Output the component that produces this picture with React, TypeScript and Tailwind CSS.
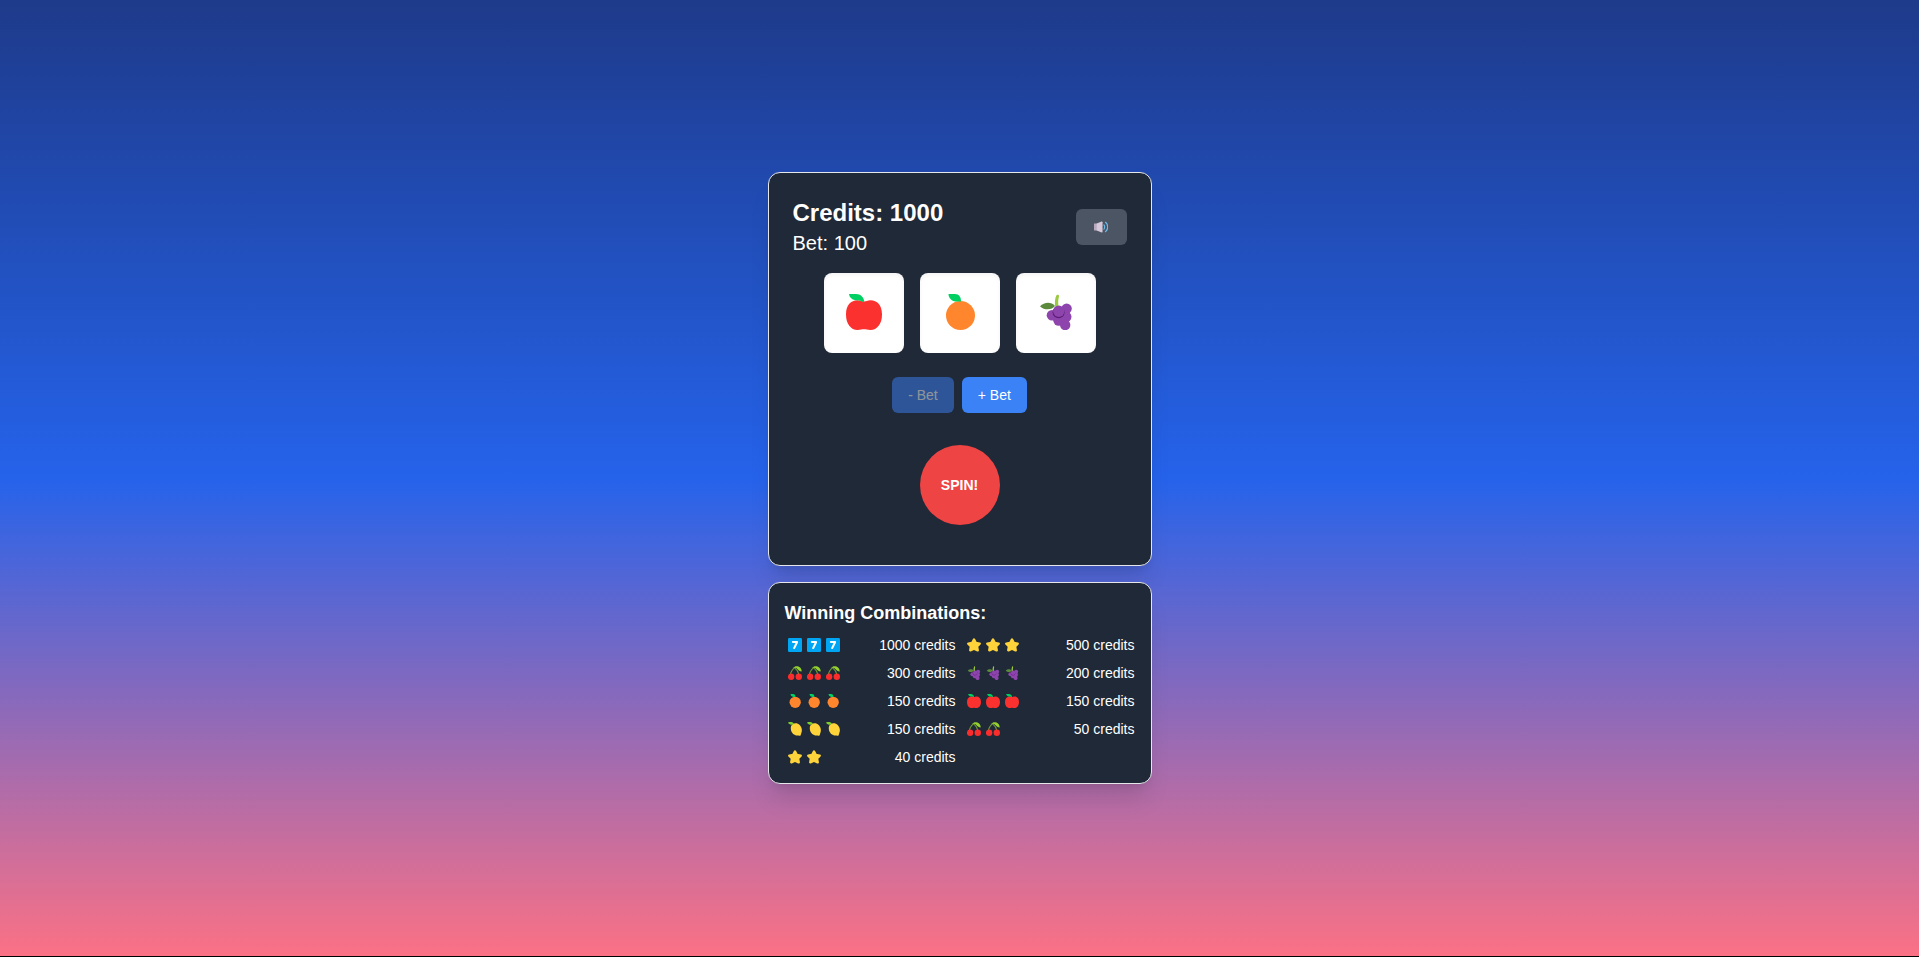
import { useState } from "react";
import type { ReactNode } from "react";

type SymbolName = "seven" | "star" | "cherry" | "grapes" | "orange" | "apple" | "lemon";

const art: Record<SymbolName, ReactNode> = {
  seven: (
    <>
      <rect width="36" height="36" rx="3.500" fill="#00a6f4" />
      <path
        d="M12.300 8H23.500C25.800 8 26.600 10 25.600 12L18.600 26.500C17.700 28.500 16.500 29 14.900 28.300C13.300 27.600 12.900 26.300 13.700 24.600L19.400 12.900H12.300C9 12.900 9 8 12.300 8Z"
        fill="#fff"
      />
    </>
  ),
  star: (
    <path
      d="M18 4L22.700 12.800L32.500 14.600L25.700 21.800L27.400 31.500L18 27.300L8.600 31.500L10.300 21.800L3.500 14.600L13.300 12.800Z"
      fill="#ffd43b"
      stroke="#ffd43b"
      strokeWidth="6.500"
      strokeLinejoin="round"
    />
  ),
  cherry: (
    <>
      <path
        d="M6.500 21C8 14 12 6 20 3M27.500 21C26.500 15 23 10 17.500 5"
        fill="none"
        stroke="#6f9f35"
        strokeWidth="2.600"
        strokeLinecap="round"
      />
      <path d="M13 5C17 0 26-1 31 4C34 7 35.500 11 35 14C30 14 26 11 22 6C19 4.500 16 4.500 13 5Z" fill="#94d12e" />
      <circle cx="8" cy="27.800" r="8.200" fill="#fb2c2c" />
      <circle cx="27.800" cy="27.800" r="8.200" fill="#fb2c2c" />
    </>
  ),
  grapes: (
    <>
      <path d="M2 12.200C6 8 13 7 17 12C14.500 15.500 7 17.200 2 12.200Z" fill="#5c8a3d" />
      <path d="M17.300 14C16.400 8 17 4 18.500 1.200C19.400.2 21.400.8 21 2.400C20 6 20 9 20.600 13Z" fill="#9bc93f" />
      <path d="M14 22L21 15L29 15L29 24L27 31L21 27Z" fill="#6d2a88" />
      <circle cx="28.600" cy="14.600" r="5.200" fill="#8e44ad" />
      <circle cx="14" cy="21.300" r="5.300" fill="#8e44ad" />
      <circle cx="27.200" cy="31" r="5.200" fill="#8e44ad" />
      <circle cx="20.800" cy="26.200" r="5.600" fill="#8e44ad" />
      <circle cx="28" cy="22.800" r="5.500" fill="#8e44ad" />
      <circle cx="20.600" cy="18.200" r="6" fill="#5b1d73" />
      <circle cx="20.800" cy="17.300" r="5.700" fill="#8e44ad" />
    </>
  ),
  orange: (
    <>
      <circle cx="18.500" cy="21.500" r="14.500" fill="#ff862d" />
      <path d="M6.500 0H13C17 0 19.200 3.500 19 7.500H13.500C9.500 7 6.500 4 6.500 0Z" fill="#00d062" />
    </>
  ),
  apple: (
    <>
      <path
        d="M0 20.500C0 11 5 6.300 11.500 6.300C14.500 6.300 16 7.600 18 7.600C20 7.600 21.500 6.300 24.500 6.300C31 6.300 36 11 36 20.500C36 30 31 36 24.500 36C21.500 36 20 35.300 18 35.300C16 35.300 14.500 36 11.500 36C5 36 0 30 0 20.500Z"
        fill="#fb312f"
      />
      <path d="M3 0H10C14.500 0 18.200 3.500 18.200 8C15.500 8 14.500 6.300 11.500 6.300H9.500C5.500 5.500 3.300 3 3 0Z" fill="#00d062" />
    </>
  ),
  lemon: (
    <>
      <path
        d="M11 6.500C16 2 25 2.500 30 7.500C35.500 13 37 21 34.500 27.500C33.500 30 33.500 31.500 32.500 34C31.500 36.500 27 35 24 35C16 34.500 9 29 7.500 20C6.500 14 7.500 9.500 11 6.500Z"
        fill="#ffd43b"
      />
      <path d="M0 1.500C4-1 11-1 15 3L13.500 5.500C8 8 2.500 7 0 1.500Z" fill="#7ccf2f" />
    </>
  ),
};

function Fruit({ name, className }: { name: SymbolName; className: string }) {
  return (
    <svg viewBox="0 0 36 36" className={className} role="img" aria-label={name}>
      {art[name]}
    </svg>
  );
}

function SpeakerIcon() {
  return (
    <svg viewBox="0 0 36 36" className="size-[14px]" aria-hidden="true">
      <path d="M1 9H9V27H1C0 27 0 26 0 25V11C0 10 0 9 1 9Z" fill="#b9a8bd" />
      <path d="M7 9L18 4.200C20.500 3.300 22 4 22 6V30C22 32 20.500 32.700 18 31.800L7 27Z" fill="#d6c8da" />
      <path
        d="M25.500 12.500C28 15 28 21 25.500 23.500M29.500 6C37 11 37 25 29.500 30"
        fill="none"
        stroke="#6fbcec"
        strokeWidth="3"
        strokeLinecap="round"
      />
    </svg>
  );
}

const combinations: { symbol: SymbolName; count: number; credits: number }[] = [
  { symbol: "seven", count: 3, credits: 1000 },
  { symbol: "star", count: 3, credits: 500 },
  { symbol: "cherry", count: 3, credits: 300 },
  { symbol: "grapes", count: 3, credits: 200 },
  { symbol: "orange", count: 3, credits: 150 },
  { symbol: "apple", count: 3, credits: 150 },
  { symbol: "lemon", count: 3, credits: 150 },
  { symbol: "cherry", count: 2, credits: 50 },
  { symbol: "star", count: 2, credits: 40 },
];

const allSymbols = Object.keys(art) as SymbolName[];

const cardClass =
  "w-full max-w-sm rounded-xl border border-[#e5e7eb] bg-[#1f2937] shadow-xl";
const betClass =
  "rounded-md bg-[#3b82f6] px-4 py-2 text-sm text-white disabled:opacity-50";

export default function App() {
  const [bet, setBet] = useState(100);
  const [credits, setCredits] = useState(1000);
  const [muted, setMuted] = useState(false);
  const [reels, setReels] = useState<SymbolName[]>(["apple", "orange", "grapes"]);

  const spin = () => {
    if (credits < bet) return;
    const next = reels.map(() => allSymbols[Math.floor(Math.random() * allSymbols.length)]);
    const win = combinations.find((c) => next.filter((s) => s === c.symbol).length >= c.count);
    setReels(next);
    setCredits(credits - bet + (win ? win.credits : 0));
  };

  return (
    <main className="flex min-h-screen flex-col items-center justify-center gap-4 border-b border-black bg-[linear-gradient(to_bottom,#1e3a8a,#2563eb,#fb7185)] font-['Liberation_Sans',Arial,sans-serif] text-white">
      <section className={`${cardClass} p-6`}>
        <div className="mb-4 flex items-center justify-between">
          <div>
            <h1 className="text-2xl font-bold">Credits: {credits}</h1>
            <p className="text-xl">Bet: {bet}</p>
          </div>
          <button
            type="button"
            aria-label="Sound"
            aria-pressed={!muted}
            onClick={() => setMuted(!muted)}
            className="flex h-9 w-[51px] items-center justify-center rounded-md bg-[#4b5563]"
          >
            <SpeakerIcon />
          </button>
        </div>
        <div className="mb-6 flex justify-center gap-4">
          {reels.map((name, i) => (
            <div
              key={i}
              className="flex size-20 items-center justify-center rounded-lg bg-white pb-0.5 shadow-[inset_0_2px_4px_0_rgba(0,0,0,0.05)]"
            >
              <Fruit name={name} className="size-9" />
            </div>
          ))}
        </div>
        <div className="mb-8 flex justify-center gap-2">
          <button type="button" disabled={bet <= 100} onClick={() => setBet(bet - 100)} className={betClass}>
            - Bet
          </button>
          <button type="button" onClick={() => setBet(bet + 100)} className={betClass}>
            + Bet
          </button>
        </div>
        <div className="mb-4 flex justify-center">
          <button type="button" onClick={spin} className="size-20 rounded-full bg-[#ef4444] text-sm font-bold">
            SPIN!
          </button>
        </div>
      </section>

      <section className={`${cardClass} p-4`}>
        <h2 className="mb-2 text-lg font-bold">Winning Combinations:</h2>
        <ul className="grid grid-cols-2 gap-2 text-sm">
          {combinations.map((c) => (
            <li key={`${c.symbol}-${c.count}`} className="flex items-center justify-between">
              <span className="flex gap-[5px] pl-[3px]">
                {Array.from({ length: c.count }, (_, i) => (
                  <Fruit key={i} name={c.symbol} className="size-[14px]" />
                ))}
              </span>
              <span>{c.credits} credits</span>
            </li>
          ))}
        </ul>
      </section>
    </main>
  );
}
